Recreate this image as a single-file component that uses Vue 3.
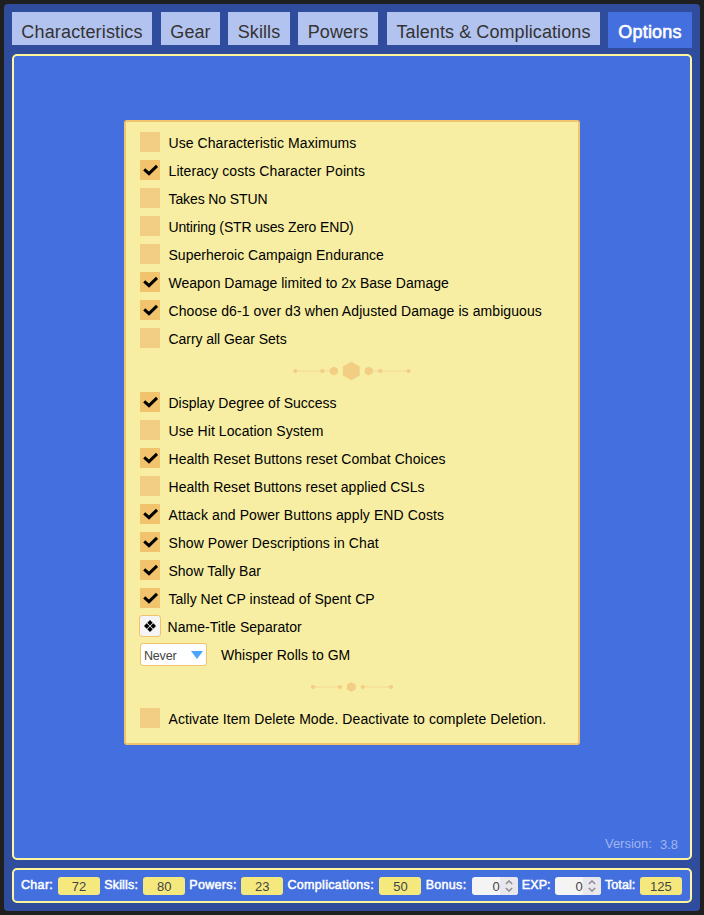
<script setup>
import { ref } from 'vue'

const tabs = [
  { name: 'Characteristics', id: 'characteristics' },
  { name: 'Gear', id: 'gear' },
  { name: 'Skills', id: 'skills' },
  { name: 'Powers', id: 'powers' },
  { name: 'Talents & Complications', id: 'talents' },
  { name: 'Options', id: 'options' },
]
const active = ref('options')

// tracking: letter spacing of the label, in pixels
const rules = ref([
  { label: 'Use Characteristic Maximums', on: false, tracking: 0.07 },
  { label: 'Literacy costs Character Points', on: true, tracking: 0.09 },
  { label: 'Takes No STUN', on: false, tracking: -0.1 },
  { label: 'Untiring (STR uses Zero END)', on: false, tracking: -0.14 },
  { label: 'Superheroic Campaign Endurance', on: false, tracking: 0.02 },
  { label: 'Weapon Damage limited to 2x Base Damage', on: true, tracking: 0.01 },
  { label: 'Choose d6-1 over d3 when Adjusted Damage is ambiguous', on: true, tracking: 0.085 },
  { label: 'Carry all Gear Sets', on: false, tracking: -0.05 },
])
const display = ref([
  { label: 'Display Degree of Success', on: true, tracking: 0 },
  { label: 'Use Hit Location System', on: false, tracking: 0.07 },
  { label: 'Health Reset Buttons reset Combat Choices', on: true, tracking: 0.06 },
  { label: 'Health Reset Buttons reset applied CSLs', on: false, tracking: 0.04 },
  { label: 'Attack and Power Buttons apply END Costs', on: true, tracking: 0.1 },
  { label: 'Show Power Descriptions in Chat', on: true, tracking: 0.08 },
  { label: 'Show Tally Bar', on: true, tracking: 0 },
  { label: 'Tally Net CP instead of Spent CP', on: true, tracking: 0.03 },
])
const deletion = ref([
  { label: 'Activate Item Delete Mode. Deactivate to complete Deletion.', on: false, tracking: 0.07 },
])

const tally = [
  { id: 'char', label: 'Char:', value: 72 },
  { id: 'skills', label: 'Skills:', value: 80 },
  { id: 'powers', label: 'Powers:', value: 23 },
  { id: 'comp', label: 'Complications:', value: 50 },
  { id: 'bonus', label: 'Bonus:', value: 0, input: true },
  { id: 'exp', label: 'EXP:', value: 0, input: true },
  { id: 'total', label: 'Total:', value: 125 },
]
</script>

<template>
  <div class="page">
    <div class="sheet">
      <nav class="tabs">
        <button
          v-for="t in tabs"
          :key="t.id"
          :class="['tab', 'tab-' + t.id, { active: active === t.id }]"
          @click="active = t.id"
        >{{ t.name }}</button>
      </nav>

      <main class="panel">
        <section class="card">
          <div v-for="o in rules" :key="o.label" class="row" @click="o.on = !o.on">
            <span :class="['box', { on: o.on }]">
              <svg v-if="o.on" viewBox="0 0 20 20"><path d="M4.2 9.3L9 13.6L17 5.9" /></svg>
            </span>
            <span class="label" :style="{ letterSpacing: o.tracking + 'px' }">{{ o.label }}</span>
          </div>

          <svg class="divider" viewBox="0 0 120 36">
            <path class="line" d="M4 19H40M80 19H118" />
            <circle cx="4.3" cy="19" r="2.1" />
            <circle cx="31.3" cy="19" r="2.1" />
            <path d="M42.9 14.6l4 2.2v4.4l-4 2.2l-4-2.2v-4.4z" />
            <path d="M60.3 9.8l8.4 4.6v9.2l-8.4 4.6l-8.4-4.6v-9.2z" />
            <path d="M77.8 14.6l4 2.2v4.4l-4 2.2l-4-2.2v-4.4z" />
            <circle cx="89.2" cy="19" r="2.1" />
            <circle cx="117.6" cy="19" r="2.1" />
          </svg>

          <div v-for="o in display" :key="o.label" class="row" @click="o.on = !o.on">
            <span :class="['box', { on: o.on }]">
              <svg v-if="o.on" viewBox="0 0 20 20"><path d="M4.2 9.3L9 13.6L17 5.9" /></svg>
            </span>
            <span class="label" :style="{ letterSpacing: o.tracking + 'px' }">{{ o.label }}</span>
          </div>
          <div class="row">
            <span class="separator">
              <svg viewBox="0 0 12 12">
                <path d="M6 0L8.7 2.7L6 5.4L3.3 2.7zM6 6.6L8.7 9.3L6 12L3.3 9.3zM2.7 3.3L5.4 6L2.7 8.7L0 6zM9.3 3.3L12 6L9.3 8.7L6.6 6z" />
              </svg>
            </span>
            <span class="label spaced">Name-Title Separator</span>
          </div>
          <div class="row">
            <span class="select">
              <span>Never</span>
              <svg viewBox="0 0 12 8"><path d="M0 0H12L6 8z" /></svg>
            </span>
            <span class="label spaced">Whisper Rolls to GM</span>
          </div>

          <svg class="divider" viewBox="0 0 120 36">
            <path class="line" d="M22 19H49M72 19H100" />
            <circle cx="22" cy="19" r="2.1" />
            <circle cx="49" cy="19" r="2.1" />
            <path d="M60.3 14.2l4.4 2.4v4.8l-4.4 2.4l-4.4-2.4v-4.8z" />
            <circle cx="71.7" cy="19" r="2.1" />
            <circle cx="100" cy="19" r="2.1" />
          </svg>

          <div v-for="o in deletion" :key="o.label" class="row" @click="o.on = !o.on">
            <span :class="['box', { on: o.on }]">
              <svg v-if="o.on" viewBox="0 0 20 20"><path d="M4.2 9.3L9 13.6L17 5.9" /></svg>
            </span>
            <span class="label" :style="{ letterSpacing: o.tracking + 'px' }">{{ o.label }}</span>
          </div>
        </section>
        <div class="version"><span>Version:</span><span class="number">3.8</span></div>
      </main>

      <footer class="tally">
        <div v-for="t in tally" :key="t.id" :class="['item', 'item-' + t.id]">
          <span class="name">{{ t.label }}</span>
          <span :class="['value', { input: t.input }]">
            <span class="amount">{{ t.value }}</span>
            <span v-if="t.input" class="spinner">
              <svg viewBox="0 0 8 12"><path d="M0.8 4L4 0.9L7.2 4M0.8 8L4 11.1L7.2 8" /></svg>
            </span>
          </span>
        </div>
      </footer>
    </div>
  </div>
</template>

<style>
body { margin: 0; background: #1f1f1f; }
</style>

<style scoped>
* { box-sizing: border-box; }
.page {
  width: 704px;
  height: 915px;
  padding: 4px;
  background: #1f1f1f;
  font-family: "Liberation Sans", Arial, sans-serif;
}
.sheet {
  display: flex;
  flex-direction: column;
  height: 907px;
  padding: 8px;
  border-radius: 4px;
  background: #2f4d9c;
}
.tabs {
  display: flex;
  align-items: flex-start;
  height: 42px;
}
.tab {
  height: 33px;
  margin-right: 8px;
  padding: 7px 0 0;
  border: 0;
  background: #b3c3ef;
  color: #333;
  font: 18px/26px "Liberation Sans", Arial, sans-serif;
  letter-spacing: 0.08px;
  text-align: center;
  white-space: nowrap;
}
.tab-characteristics { width: 140px; margin-right: 9px; letter-spacing: 0.15px; }
.tab-gear { width: 59px; }
.tab-skills { width: 62px; }
.tab-powers { width: 80px; margin-right: 9px; }
.tab-talents { width: 213px; }
.tab-options { width: 84px; margin-right: 0; }
.tab.active {
  height: 36px;
  padding-bottom: 3px;
  background: #446fdf;
  color: #fff;
  letter-spacing: 0.2px;
  -webkit-text-stroke: 0.6px #fff;
}
.panel {
  display: flex;
  flex-direction: column;
  align-items: center;
  justify-content: space-between;
  height: 806px;
  padding: 64px 12px 5px;
  border: 2px solid #fff59b;
  border-radius: 5px;
  background: #446fdf;
}
.card {
  width: 456px;
  height: 625px;
  padding: 6px 14px;
  border: 2px solid #f0c36c;
  border-radius: 3px;
  background: #f7eea3;
}
.row {
  display: flex;
  align-items: center;
  height: 28px;
}
.label {
  padding-top: 2px;
  color: #000;
  font-size: 14px;
  line-height: 20px;
  white-space: nowrap;
}
.label.spaced { letter-spacing: 0.05px; }
.box {
  width: 20px;
  height: 20px;
  margin-right: 8.5px;
  background: #f2cd84;
}
.box.on { background: #f0c36c; }
.box svg { display: block; width: 20px; height: 20px; }
.box path { fill: none; stroke: #000; stroke-width: 3; }
.divider {
  display: block;
  width: 120px;
  height: 36px;
  margin: 0 auto 0 151px;
  fill: #f2cd84;
}
.divider .line { stroke: #f5de9b; stroke-width: 1.6; }
.separator {
  display: flex;
  align-items: center;
  justify-content: center;
  width: 22px;
  height: 22px;
  margin: 0 6.5px 0 -1px;
  border: 1px solid #f0c36c;
  border-radius: 3px;
  background: #f4f4f4;
}
.separator svg { width: 12px; height: 12px; }
.select {
  display: flex;
  align-items: center;
  justify-content: space-between;
  width: 67px;
  height: 23px;
  margin-right: 14px;
  padding: 0 3px;
  border: 1px solid #f0c36c;
  border-radius: 3px;
  background: #fff;
  color: #444;
  font-size: 12.5px;
  line-height: 22px;
}
.select span { padding-top: 3px; letter-spacing: -0.2px; }
.select svg { width: 12px; height: 8px; margin-top: 1px; fill: #4ba5ff; }
.version {
  display: flex;
  align-self: flex-end;
  color: #a1b6ee;
  font-size: 13px;
  line-height: 16px;
}
.version .number { margin-left: 8px; padding-top: 1px; }
.tally {
  display: flex;
  justify-content: space-between;
  height: 35px;
  margin-top: 8px;
  padding: 7px 8px 0 7px;
  border: 2px solid #fff59b;
  border-radius: 5px;
  background: #446fdf;
}
.item {
  display: flex;
  justify-content: space-between;
  height: 18px;
}
.item-char { width: 79px; }
.item-skills { width: 81px; }
.item-powers { width: 94px; }
.item-comp { width: 134px; }
.item-bonus { width: 92px; }
.item-exp { width: 79px; }
.item-total { width: 77px; }
.name {
  color: #fff;
  font-size: 12.5px;
  line-height: 17px;
  letter-spacing: 0.32px;
  white-space: nowrap;
  -webkit-text-stroke: 0.5px #fff;
}
.item-exp .name, .item-total .name { letter-spacing: 0.1px; }
.item-skills .name { letter-spacing: 0.2px; }
.value {
  display: flex;
  justify-content: center;
  width: 42px;
  height: 18px;
  border-radius: 3px;
  background: #f5e97e;
  color: #444;
  font-size: 13px;
  line-height: 19px;
}
.value.input {
  justify-content: flex-end;
  width: 46px;
  background: #f4f4f4;
  overflow: hidden;
}
.spinner {
  display: flex;
  align-items: center;
  justify-content: center;
  width: 18px;
  height: 18px;
  background: #e8e7ec;
}
.spinner svg { width: 8px; height: 12px; fill: none; stroke: #8c8b92; stroke-width: 1.4; }
</style>
